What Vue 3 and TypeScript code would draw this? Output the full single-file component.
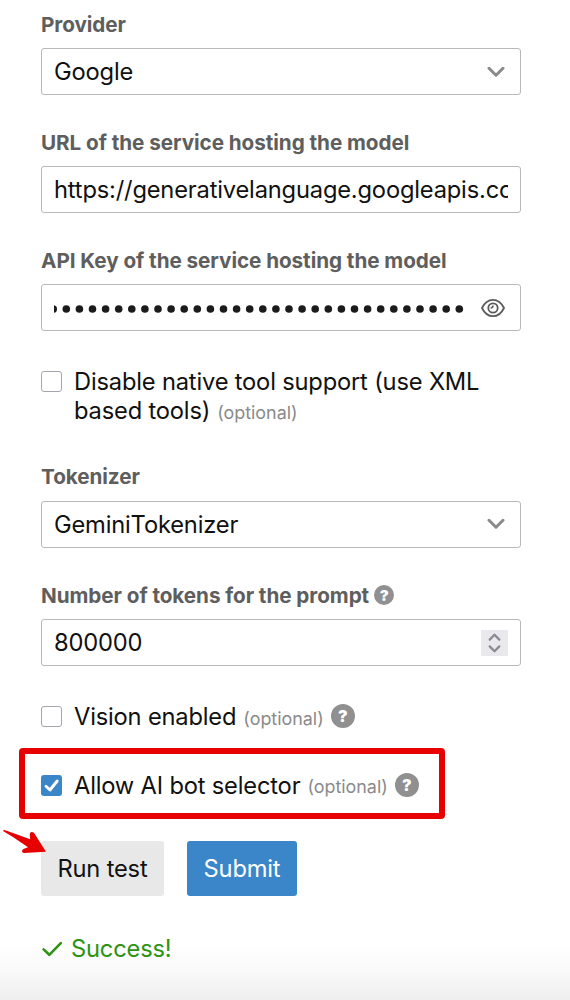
<script setup lang="ts">
import { ref } from 'vue'

const provider = ref('Google')
const url = ref('https://generativelanguage.googleapis.com')
const tokenizer = ref('GeminiTokenizer')
const promptTokens = ref('800000')
const keyDots = Array.from({ length: 32 }, (_, i) => -0.8 + i * 13.1)
</script>

<template>
  <main class="page">
    <form class="form" @submit.prevent>
      <section class="field">
        <label class="label">Provider</label>
        <div class="control">
          <span class="value">{{ provider }}</span>
          <svg class="chevron" viewBox="0 0 18 12"><path d="M2 2.3 9 9.2 16 2.3" /></svg>
        </div>
      </section>

      <section class="field">
        <label class="label">URL of the service hosting the model</label>
        <div class="control">
          <span class="value clip">{{ url }}</span>
        </div>
      </section>

      <section class="field">
        <label class="label">API Key of the service hosting the model</label>
        <div class="control">
          <svg class="dots" viewBox="0 0 414 10">
            <circle v-for="x in keyDots" :key="x" :cx="x" cy="5" r="3.8" />
          </svg>
          <svg class="eye" viewBox="0 0 24 20">
            <path d="M1 10C3.6 4.6 7.4 1.8 12 1.8S20.4 4.6 23 10C20.4 15.4 16.6 18.2 12 18.2S3.6 15.4 1 10Z" />
            <circle cx="12" cy="10" r="4.7" />
            <path class="glint" d="M9.6 10A2.4 2.4 0 0 0 12 7.6" />
          </svg>
        </div>
      </section>

      <div class="check disable">
        <span class="box"></span>
        <div class="check-text">
          <span>Disable native tool support (use XML</span><br /><span>based tools)</span>
          <small class="optional">(optional)</small>
        </div>
      </div>

      <section class="field">
        <label class="label">Tokenizer</label>
        <div class="control">
          <span class="value">{{ tokenizer }}</span>
          <svg class="chevron" viewBox="0 0 18 12"><path d="M2 2.3 9 9.2 16 2.3" /></svg>
        </div>
      </section>

      <section class="field last">
        <label class="label">Number of tokens for the prompt<span class="help small">?</span></label>
        <div class="control">
          <span class="value">{{ promptTokens }}</span>
          <span class="spinner">
            <svg viewBox="0 0 27 26"><path d="M8.7 9.6 13.5 4.8 18.3 9.6M8.7 16.4 13.5 21.2 18.3 16.4" /></svg>
          </span>
        </div>
      </section>

      <div class="check single">
        <span class="box"></span>
        <span>Vision enabled</span>
        <small class="optional">(optional)</small>
        <span class="help">?</span>
      </div>

      <div class="highlight">
        <div class="check single">
          <span class="box checked">
            <svg viewBox="0 0 21 21"><path d="M5 11.2 9 15 16.2 6" /></svg>
          </span>
          <span>Allow AI bot selector</span>
          <small class="optional">(optional)</small>
          <span class="help">?</span>
        </div>
      </div>

      <div class="actions">
        <button class="btn" type="button">Run test</button>
        <button class="btn primary" type="submit">Submit</button>
        <svg class="arrow" viewBox="0 0 46 28">
          <path d="M3.2 2.2Q4 1.6 6 2.5L30.2 11.3 29.8 7Q29.6 4.2 32 4 33.7 4 34.6 5.8L46 23.7 24 25Q22 25 22 23.2 22.1 21.5 24 20.8L28 19.3 13.3 9.3 4.2 3.7Q2.8 2.9 3.2 2.2Z" />
        </svg>
      </div>

      <p class="success">
        <svg viewBox="0 0 22 18"><path d="M2.6 9.4 8.3 14.8 19.8 3.2" /></svg>
        <span>Success!</span>
      </p>
    </form>
  </main>
</template>

<style>
body {
  margin: 0;
}
</style>

<style scoped>
.page {
  box-sizing: border-box;
  height: 1000px;
  overflow: hidden;
  padding: 9px 49px 0 41px;
  background: linear-gradient(to bottom, #fff 0, #fff 940px, #fafafa 970px, #eee 1000px);
  font-family: Inter, "Liberation Sans", sans-serif;
  font-size: 23.7px;
  letter-spacing: -0.18px;
  color: #111;
}
.field {
  margin-bottom: 32.2px;
}
.label {
  display: flex;
  align-items: center;
  height: 30px;
  margin-bottom: 9px;
  font-size: 20.7px;
  font-weight: 700;
  letter-spacing: -0.06px;
  color: #5e5e5e;
  white-space: nowrap;
}
.control {
  box-sizing: border-box;
  display: flex;
  align-items: center;
  justify-content: space-between;
  height: 47px;
  padding: 0 12px;
  border: 1px solid #b9b9b9;
  border-radius: 3px;
  background: #fff;
}
.value {
  white-space: nowrap;
}
.clip {
  overflow: hidden;
}
.chevron {
  width: 18px;
  height: 12px;
  margin-right: 3px;
  fill: none;
  stroke: #8a8a8a;
  stroke-width: 3;
  stroke-linecap: round;
  stroke-linejoin: round;
}
.dots {
  width: 414px;
  height: 10px;
  fill: #1b1b1b;
  margin-top: 3px;
}
.eye {
  width: 24px;
  height: 20px;
  margin-right: 3px;
  fill: none;
  stroke: #5c5c5c;
  stroke-width: 1.8;
}
.glint {
  stroke-width: 1.5;
}
.spinner {
  width: 27px;
  height: 26px;
  background: #e8e8ed;
}
.spinner svg {
  display: block;
  width: 27px;
  height: 26px;
  fill: none;
  stroke: #8a8a96;
  stroke-width: 2.3;
  stroke-linecap: round;
  stroke-linejoin: round;
}
.check {
  display: flex;
  line-height: 29px;
  white-space: nowrap;
}
.box {
  box-sizing: border-box;
  flex: none;
  width: 21px;
  height: 21px;
  margin-right: 12px;
  border: 1.4px solid #a5a5ae;
  border-radius: 3px;
  background: #fff;
}
.checked {
  border: 0;
  background: #3a86c8;
}
.checked svg {
  display: block;
  width: 21px;
  height: 21px;
  fill: none;
  stroke: #fff;
  stroke-width: 2.9;
  stroke-linecap: round;
  stroke-linejoin: round;
}
.disable {
  height: 58px;
  margin-top: 35.9px;
  margin-bottom: 36.7px;
}
.disable .box {
  margin-top: 4px;
}
.optional {
  margin-left: 7px;
  font-size: 17.9px;
  letter-spacing: 0;
  color: #8a8a8a;
}
.single {
  align-items: center;
  height: 29px;
}
.single .optional {
  padding-top: 3px;
}
.help {
  display: flex;
  align-items: center;
  justify-content: center;
  flex: none;
  width: 24px;
  height: 24px;
  margin: -1px 0 0 7px;
  border-radius: 50%;
  background: #909090;
  color: #fff;
  font-size: 16px;
  font-weight: 900;
  letter-spacing: 0;
  line-height: 1;
}
.small {
  width: 20px;
  height: 20px;
  margin: 0 0 0 5px;
  font-size: 15px;
}
.last {
  margin-bottom: 35.9px;
}
.highlight {
  box-sizing: border-box;
  display: flex;
  align-items: center;
  width: 426px;
  height: 71px;
  margin: 17.2px 0 21.8px -22px;
  padding: 3px 0 0 16px;
  border: 6px solid #e60000;
  border-radius: 4px;
}
.actions {
  position: relative;
  display: flex;
  gap: 23px;
}
.btn {
  width: 123px;
  height: 55px;
  padding: 0;
  border: 0;
  border-radius: 3px;
  background: #e8e8e8;
  color: #111;
  font: inherit;
  letter-spacing: inherit;
  white-space: nowrap;
}
.primary {
  width: 110px;
  background: #3a86c8;
  color: #fff;
}
.arrow {
  position: absolute;
  left: -41px;
  top: -13px;
  width: 46px;
  height: 28px;
  fill: #e60000;
}
.success {
  display: flex;
  align-items: center;
  height: 30px;
  margin: 37.6px 0 0;
  color: #2c9412;
}
.success svg {
  width: 22px;
  height: 18px;
  margin-right: 8px;
  fill: none;
  stroke: #2c9412;
  stroke-width: 2.6;
  stroke-linecap: round;
  stroke-linejoin: round;
}
</style>
